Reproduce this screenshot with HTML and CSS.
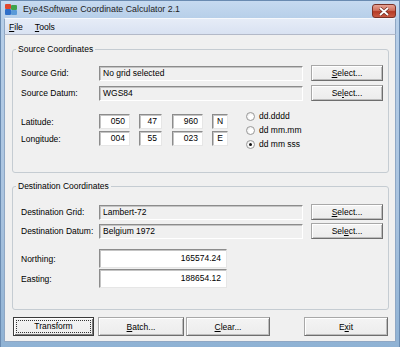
FILE: index.html
```html
<!DOCTYPE html>
<html lang="en">
<head>
  <meta charset="utf-8">
  <title>Eye4Software Coordinate Calculator 2.1</title>
  <link rel="stylesheet" href="styles.css">
</head>
<body>
  <div class="window">
    <div class="titlebar">
      <svg class="app-icon" width="14" height="13" viewBox="0 0 14 13">
        <rect x="1" y="1" width="6" height="5" rx="1" fill="#e0452c"/>
        <rect x="7" y="2" width="6" height="5" rx="1" fill="#3fa34d"/>
        <rect x="1" y="6" width="6" height="6" rx="1" fill="#2f6fc9"/>
        <rect x="7" y="7" width="6" height="5" rx="1" fill="#5a9ad8"/>
      </svg>
      <span class="title">Eye4Software Coordinate Calculator 2.1</span>
      <div class="close">
        <svg width="12" height="9" viewBox="0 0 12 9">
          <path d="M2 1 L10 8 M10 1 L2 8" stroke="#6b2b22" stroke-width="3.2"/>
          <path d="M2 1 L10 8 M10 1 L2 8" stroke="#fff" stroke-width="1.8"/>
        </svg>
      </div>
    </div>

    <div class="frame">
      <div class="menubar">
        <span class="menu"><u>F</u>ile</span>
        <span class="menu"><u>T</u>ools</span>
      </div>

      <div class="client">
        <fieldset class="group source">
          <legend>Source Coordinates</legend>
          <div class="row">
            <span class="label">Source Grid:</span>
            <span class="field wide">No grid selected</span>
            <button class="btn select"><u>S</u>elect...</button>
          </div>
          <div class="row">
            <span class="label">Source Datum:</span>
            <span class="field wide">WGS84</span>
            <button class="btn select">Se<u>l</u>ect...</button>
          </div>

          <div class="dms">
            <div class="dms-rows">
              <div class="row small">
                <span class="label">Latitude:</span>
                <span class="box deg">050</span>
                <span class="box min">47</span>
                <span class="box sec">960</span>
                <span class="box hemi">N</span>
              </div>
              <div class="row small">
                <span class="label">Longitude:</span>
                <span class="box deg">004</span>
                <span class="box min">55</span>
                <span class="box sec">023</span>
                <span class="box hemi">E</span>
              </div>
            </div>
            <div class="radios">
              <label class="radio"><span class="dot"></span>dd.dddd</label>
              <label class="radio"><span class="dot"></span>dd mm.mm</label>
              <label class="radio"><span class="dot checked"></span>dd mm sss</label>
            </div>
          </div>
        </fieldset>

        <fieldset class="group dest">
          <legend>Destination Coordinates</legend>
          <div class="row">
            <span class="label">Destination Grid:</span>
            <span class="field wide">Lambert-72</span>
            <button class="btn select"><u>S</u>elect...</button>
          </div>
          <div class="row">
            <span class="label">Destination Datum:</span>
            <span class="field wide">Belgium 1972</span>
            <button class="btn select">Sel<u>e</u>ct...</button>
          </div>
          <div class="result-rows">
            <div class="row tall">
              <span class="label">Northing:</span>
              <span class="box result">165574.24</span>
            </div>
            <div class="row tall">
              <span class="label">Easting:</span>
              <span class="box result">188654.12</span>
            </div>
          </div>
        </fieldset>

        <div class="actions">
          <button class="btn default"><span class="focus">Transform</span></button>
          <button class="btn batch"><u>B</u>atch...</button>
          <button class="btn clear"><u>C</u>lear...</button>
          <button class="btn exit">E<u>x</u>it</button>
        </div>
      </div>
    </div>
  </div>
</body>
</html>
```

FILE: styles.css
```css
body {
  margin: 0;
  font-family: "Liberation Sans", Arial, sans-serif;
  font-size: 8.5px;
  color: #000;
  background: #fff;
}
u {
  text-decoration-thickness: 1px;
  text-underline-offset: 1px;
}
.window {
  width: 400px;
  height: 347px;
  box-sizing: border-box;
  background: linear-gradient(to bottom, #b7cfe9, #a9c3df 60%, #8fb2d4);
  border: 1px solid #6a8bb1;
  border-bottom: none;
  display: flex;
  flex-direction: column;
}
.titlebar {
  height: 17px;
  display: flex;
  align-items: flex-start;
  padding-left: 3px;
  background: linear-gradient(to bottom, #c6daf0, #b7cfe9);
}
.app-icon {
  margin-top: 2px;
}
.title {
  margin-left: 5px;
  margin-top: 3px;
  font-size: 8.8px;
  color: #1d1d1d;
}
.close {
  margin-left: auto;
  margin-right: 3px;
  margin-top: 3px;
  width: 22px;
  height: 12px;
  border: 1px solid #7a3126;
  border-radius: 3px;
  background: linear-gradient(to bottom, #e6a394, #d0705d 45%, #b53b26 55%, #c85a43);
  display: flex;
  align-items: center;
  justify-content: center;
}
.frame {
  flex: 1;
  display: flex;
  flex-direction: column;
  padding: 0 3px 5px 3px;
}
.menubar {
  height: 15px;
  display: flex;
  align-items: center;
  gap: 12px;
  padding-left: 4px;
  background: linear-gradient(to bottom, #e6ecf7, #d9e2f2);
  border-top: 1px solid #f6f8fc;
  border-bottom: 1px solid #b3b9c8;
  border-left: 1px solid #8fa7c4;
  border-right: 1px solid #8fa7c4;
  font-size: 8.6px;
}
.client {
  flex: 1;
  background: #f0f0f0;
  border-left: 1px solid #8fa7c4;
  border-right: 1px solid #8fa7c4;
  border-bottom: 1px solid #8fa7c4;
  display: flex;
  flex-direction: column;
  padding: 0 6px 0 7px;
}
.group {
  margin: 0;
  padding: 0 4px 0 8px;
  min-width: 0;
  border: 1px solid #c5ccd2;
  border-radius: 3px;
}
.group legend {
  padding: 0 2px;
  margin-left: -5px;
  line-height: 12px;
}
.source {
  margin-top: 8px;
  padding-top: 10px;
  padding-bottom: 21px;
}
.dest {
  margin-top: 7px;
  padding-top: 12px;
  padding-bottom: 21px;
}
.row {
  display: flex;
  align-items: flex-end;
  height: 16px;
}
.row + .row {
  margin-top: 4px;
}
.dest .row + .row {
  margin-top: 3px;
}
.label {
  width: 78px;
  align-self: center;
  flex-shrink: 0;
}
.field {
  height: 15px;
  box-sizing: border-box;
  line-height: 13px;
  padding-left: 3px;
  border-top: 1px solid #8c8c8c;
  border-left: 1px solid #8c8c8c;
  border-right: 1px solid #fff;
  border-bottom: 1px solid #fff;
  box-shadow: inset 1px 1px 0 #c4c4c4;
  background: #f0f0f0;
  white-space: nowrap;
}
.wide {
  width: 204px;
}
.btn {
  font: inherit;
  color: #000;
  height: 16px;
  padding: 0;
  box-sizing: border-box;
  background: linear-gradient(to bottom, #f4f4f4, #ececec);
  border: 1px solid;
  border-color: #a8a8a8 #6e6e6e #6e6e6e #a8a8a8;
  box-shadow: inset 1px 1px 0 #fff, inset -1px -1px 0 #bdbdbd;
}
.select {
  width: 72px;
  margin-left: 8px;
}
.dms {
  display: flex;
  align-items: flex-start;
  margin-top: 13px;
}
.row.small {
  height: 15px;
}
.dms .row + .row {
  margin-top: 2px;
}
.box {
  height: 15px;
  box-sizing: border-box;
  line-height: 13px;
  background: #fff;
  border-top: 1px solid #8c8c8c;
  border-left: 1px solid #8c8c8c;
  border-right: 1px solid #e6e6e6;
  border-bottom: 1px solid #e6e6e6;
  box-shadow: inset 1px 1px 0 #c4c4c4;
  text-align: right;
  padding-right: 4px;
}
.deg {
  width: 31px;
}
.min {
  width: 23px;
  margin-left: 9px;
}
.sec {
  width: 31px;
  margin-left: 10px;
}
.hemi {
  width: 16px;
  margin-left: 9px;
  text-align: center;
  padding: 0;
}
.radios {
  display: flex;
  flex-direction: column;
  margin-left: 18px;
  margin-top: -5px;
}
.radio {
  display: flex;
  align-items: center;
  height: 14px;
}
.dot {
  width: 9px;
  height: 9px;
  box-sizing: border-box;
  border-radius: 50%;
  border: 1px solid #9a9a9a;
  background: radial-gradient(circle at 60% 60%, #fff 30%, #e2e2e2);
  margin-right: 4px;
  display: flex;
  align-items: center;
  justify-content: center;
}
.dot.checked::after {
  content: "";
  width: 3px;
  height: 3px;
  border-radius: 50%;
  background: #111;
}
.result-rows {
  margin-top: 10px;
}
.row.tall {
  height: 19px;
}
.result-rows .row + .row {
  margin-top: 1px;
}
.result {
  width: 128px;
  height: 19px;
  line-height: 17px;
  padding-right: 5px;
}
.actions {
  display: flex;
  margin-top: 7px;
  padding-left: 1px;
}
.actions .btn {
  height: 19px;
}
.default {
  width: 81px;
  border: 1px solid #3c3c3c;
  box-shadow: inset 1px 1px 0 #fff, inset -1px -1px 0 #7a7a7a;
  padding: 2px;
}
.focus {
  display: block;
  height: 100%;
  box-sizing: border-box;
  border: 1px dotted #333;
  line-height: 11px;
}
.batch {
  width: 86px;
  margin-left: 4px;
}
.clear {
  width: 84px;
  margin-left: 2px;
}
.exit {
  width: 84px;
  margin-left: auto;
  margin-right: 1px;
}
```
